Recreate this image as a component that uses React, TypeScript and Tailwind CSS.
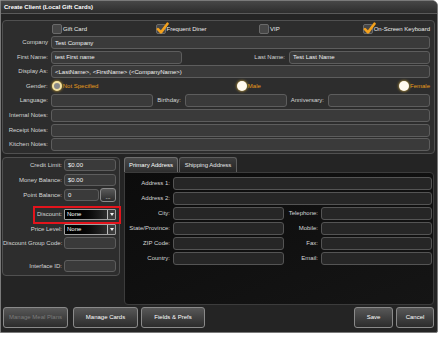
import React from 'react';

const inputCls =
  'rounded-[3px] border border-[#5d5d5d] bg-[#3a3a3a] px-[3px] text-[6px] leading-[10px] text-[#f2f2f2] flex items-center whitespace-nowrap';
const darkInputCls = '!bg-[#262626] !border-[#545454]';
const labelCls = 'text-right text-[6px] text-[#d6d6d6] whitespace-nowrap';

const Box: React.FC<{ className?: string; value?: string }> = ({ className = '', value }) => (
  <div className={`${inputCls} ${className}`}>{value}</div>
);

const CheckItem: React.FC<{ label: string; checked?: boolean; className?: string }> = ({ label, checked, className = '' }) => (
  <div className={`flex items-center whitespace-nowrap ${className}`}>
    <div className="relative ml-[1px] h-[10px] w-[10px] shrink-0 rounded-[2px] border border-[#6a6a6a] bg-[#474747]">
      {checked && (
        <svg className="absolute -left-[1px] -top-[3px] h-[13px] w-[13px]" viewBox="0 0 12 12">
          <path d="M1.8 6.6 L4.6 9.6 L10.6 1.6" stroke="#f4a11c" strokeWidth="2.4" fill="none" strokeLinecap="round" strokeLinejoin="round" />
        </svg>
      )}
    </div>
    <span className="ml-[1px] text-[6px] text-[#eaeaea]">{label}</span>
  </div>
);

const Radio: React.FC<{ label: string; selected?: boolean; className?: string }> = ({ label, selected, className = '' }) => (
  <div className={`flex items-center ${className}`}>
    <div
      className={
        selected
          ? 'ml-[1px] h-[10px] w-[10px] rounded-full border-[2px] border-[#f3e2a4] bg-[#8a8a8a] shadow-[0_0_3px_#e0b030]'
          : 'ml-[1px] h-[10px] w-[10px] rounded-full bg-[#fffaf0] shadow-[0_0_3px_#f0c040]'
      }
    />
    <span className="ml-[1px] text-[6px] text-[#e89c1c]">{label}</span>
  </div>
);

const Dropdown: React.FC<{ value: string }> = ({ value }) => (
  <div className="ml-[2px] flex h-[11px] w-[52px] items-center rounded-[1px] border border-[#a0a0a0] bg-linear-to-r from-black via-[#0b0b0b] to-[#404040]">
    <span className="flex-1 pl-[2px] text-[6px] leading-[9px] text-white">{value}</span>
    <div className="flex h-full w-[8px] items-center justify-center border-l border-[#bdbdbd] bg-[#3c3c3c]">
      <svg width="4" height="3" viewBox="0 0 4 3">
        <path d="M0 0 L4 0 L2 3 Z" fill="#f0f0f0" />
      </svg>
    </div>
  </div>
);

const Button: React.FC<{ label: string; className?: string; disabled?: boolean }> = ({ label, className = '', disabled }) => (
  <div
    className={`flex h-[21px] items-center justify-center rounded-[3px] border border-[#8a8a8a] bg-linear-to-b from-[#585858] to-[#2c2c2c] text-[6px] ${
      disabled ? 'text-[#7c7c7c]' : 'text-white'
    } ${className}`}
  >
    {label}
  </div>
);

export default function App() {
  return (
    <div className="h-[337px] w-[443px] bg-white font-['Liberation_Sans',Arial,sans-serif]">
      <div className="flex h-[333px] w-[438px] flex-col overflow-hidden rounded-tr-[6px] rounded-br-[2px] border border-[#7a7a7a] bg-[#242424]">
        {/* title */}
        <div className="flex h-[13px] shrink-0 items-center border-b border-[#5a5a5a] bg-linear-to-b from-[#474747] to-[#2d2d2d] pl-[3px] text-[6px] font-bold text-white">
          Create Client (Local Gift Cards)
        </div>

        {/* top section */}
        <div className="ml-[1px] mt-[6px] flex h-[134px] w-[433px] flex-col rounded-[4px] border border-[#505050] bg-[#2d2d2d] pr-[4px] pt-[2px]">
          <div className="flex h-[12px] items-center pl-[48px]">
            <CheckItem label="Gift Card" className="w-[104px]" />
            <CheckItem label="Frequent Diner" checked className="w-[104px]" />
            <CheckItem label="VIP" className="w-[104px]" />
            <CheckItem label="On-Screen Keyboard" checked />
          </div>
          <div className="mt-[1px] flex flex-col gap-[1.6px]">
            <div className="flex h-[13px] items-center">
              <div className={`w-[45px] ${labelCls}`}>Company</div>
              <Box className="ml-[3px] h-full flex-1" value="Test Company" />
            </div>
            <div className="flex h-[13px] items-center">
              <div className={`w-[45px] ${labelCls}`}>First Name:</div>
              <Box className="ml-[3px] h-full w-[131px]" value="test First name" />
              <div className={`flex-1 pr-[4px] ${labelCls}`}>Last Name:</div>
              <Box className="h-full w-[141px]" value="Test Last Name" />
            </div>
            <div className="flex h-[13px] items-center">
              <div className={`w-[45px] ${labelCls}`}>Display As:</div>
              <Box className="ml-[3px] h-full flex-1" value="<LastName>, <FirstName> (<CompanyName>)" />
            </div>
            <div className="flex h-[13px] items-center">
              <div className={`w-[45px] ${labelCls}`}>Gender:</div>
              <Radio label="Not Specified" selected className="ml-[3px] w-[186px]" />
              <Radio label="Male" className="w-[163px]" />
              <Radio label="Female" />
            </div>
            <div className="flex h-[13px] items-center">
              <div className={`w-[45px] ${labelCls}`}>Language:</div>
              <Box className="ml-[3px] h-full w-[102px]" />
              <div className={`w-[32px] pr-[4px] ${labelCls}`}>Birthday:</div>
              <Box className="h-full w-[102px]" />
              <div className={`w-[41px] pr-[4px] ${labelCls}`}>Anniversary:</div>
              <Box className="h-full flex-1" />
            </div>
            <div className="flex h-[13px] items-center">
              <div className={`w-[45px] ${labelCls}`}>Internal Notes:</div>
              <Box className="ml-[3px] h-full flex-1" />
            </div>
            <div className="flex h-[13px] items-center">
              <div className={`w-[45px] ${labelCls}`}>Receipt Notes:</div>
              <Box className="ml-[3px] h-full flex-1" />
            </div>
            <div className="flex h-[13px] items-center">
              <div className={`w-[45px] ${labelCls}`}>Kitchen Notes:</div>
              <Box className="ml-[3px] h-full flex-1" />
            </div>
          </div>
        </div>

        {/* bottom section */}
        <div className="mt-[3px] flex h-[148px] items-start">
          {/* left panel */}
          <div className="relative ml-[1px] flex h-[119px] w-[118px] flex-col rounded-[4px] border border-[#505050] bg-[#2d2d2d] pr-[3px]">
            <div className="mt-[1px] flex h-[12px] items-center">
              <div className={`w-[59px] ${labelCls}`}>Credit Limit:</div>
              <Box className="ml-[2px] h-full flex-1" value="$0.00" />
            </div>
            <div className="mt-[3px] flex h-[12px] items-center">
              <div className={`w-[59px] ${labelCls}`}>Money Balance:</div>
              <Box className="ml-[2px] h-full flex-1" value="$0.00" />
            </div>
            <div className="mt-[3px] flex h-[12px] items-center">
              <div className={`w-[59px] ${labelCls}`}>Point Balance:</div>
              <Box className="ml-[2px] h-full w-[35px]" value="0" />
              <div className="ml-[1px] flex h-[14px] flex-1 items-end justify-center rounded-[3px] border border-[#8a8a8a] bg-linear-to-b from-[#5a5a5a] to-[#2c2c2c] pb-[1px] text-[6px] leading-[6px] text-white">
                ...
              </div>
            </div>
            <div className="mt-[8px] flex h-[11px] items-center">
              <div className={`w-[59px] ${labelCls}`}>Discount:</div>
              <Dropdown value="None" />
            </div>
            <div className="mt-[4px] flex h-[11px] items-center">
              <div className={`w-[59px] ${labelCls}`}>Price Level:</div>
              <Dropdown value="None" />
            </div>
            <div className="mt-[2px] flex h-[12px] items-center">
              <div className={`w-[59px] ${labelCls}`}>Discount Group Code:</div>
              <Box className="ml-[2px] h-full flex-1" />
            </div>
            <div className="mt-[11px] flex h-[12px] items-center">
              <div className={`w-[59px] ${labelCls}`}>Interface ID:</div>
              <Box className="ml-[2px] h-full flex-1" />
            </div>
            <div className="absolute left-[30px] top-[48px] h-[18px] w-[88px] border-2 border-[#e3141c]" />
          </div>

          {/* address tabs */}
          <div className="ml-[4px] flex w-[310px] flex-col">
            <div className="flex h-[15px] items-end">
              <div className="flex h-[15px] w-[54px] items-center justify-center rounded-t-[3px] border border-b-0 border-[#6e6e6e] bg-linear-to-b from-[#4a4a4a] to-[#2e2e2e] text-[6px] text-white">
                Primary Address
              </div>
              <div className="ml-[1px] flex h-[15px] w-[58px] items-center justify-center rounded-t-[3px] border border-b-0 border-[#5e5e5e] bg-linear-to-b from-[#3c3c3c] to-[#262626] text-[6px] text-[#e8e8e8]">
                Shipping Address
              </div>
            </div>
            <div className="flex h-[133px] flex-col gap-[2px] rounded-b-[4px] rounded-tr-[4px] border border-[#3c3c3c] bg-linear-to-br from-[#0c0c0c] to-[#151515] pr-[1px] pt-[4px]">
              <div className="flex h-[13px] items-center">
                <div className={`w-[45px] ${labelCls}`}>Address 1:</div>
                <Box className={`ml-[3px] h-full flex-1 ${darkInputCls}`} />
              </div>
              <div className="flex h-[13px] items-center">
                <div className={`w-[45px] ${labelCls}`}>Address 2:</div>
                <Box className={`ml-[3px] h-full flex-1 ${darkInputCls}`} />
              </div>
              {[
                ['City:', 'Telephone:'],
                ['State/Province:', 'Mobile:'],
                ['ZIP Code:', 'Fax:'],
                ['Country:', 'Email:'],
              ].map(([a, b]) => (
                <div key={a} className="flex h-[13px] items-center">
                  <div className={`w-[45px] ${labelCls}`}>{a}</div>
                  <Box className={`ml-[3px] h-full w-[111px] ${darkInputCls}`} />
                  <div className={`w-[37px] pr-[3px] ${labelCls}`}>{b}</div>
                  <Box className={`h-full flex-1 ${darkInputCls}`} />
                </div>
              ))}
            </div>
          </div>
        </div>

        {/* buttons */}
        <div className="mt-[2px] flex items-center pl-[2px] pr-[3px]">
          <Button label="Manage Meal Plans" disabled className="w-[65px]" />
          <Button label="Manage Cards" className="ml-[5px] w-[65px]" />
          <Button label="Fields & Prefs" className="ml-[3px] w-[64px]" />
          <div className="flex-1" />
          <Button label="Save" className="w-[39px]" />
          <Button label="Cancel" className="ml-[3px] w-[38px]" />
        </div>
      </div>
    </div>
  );
}
